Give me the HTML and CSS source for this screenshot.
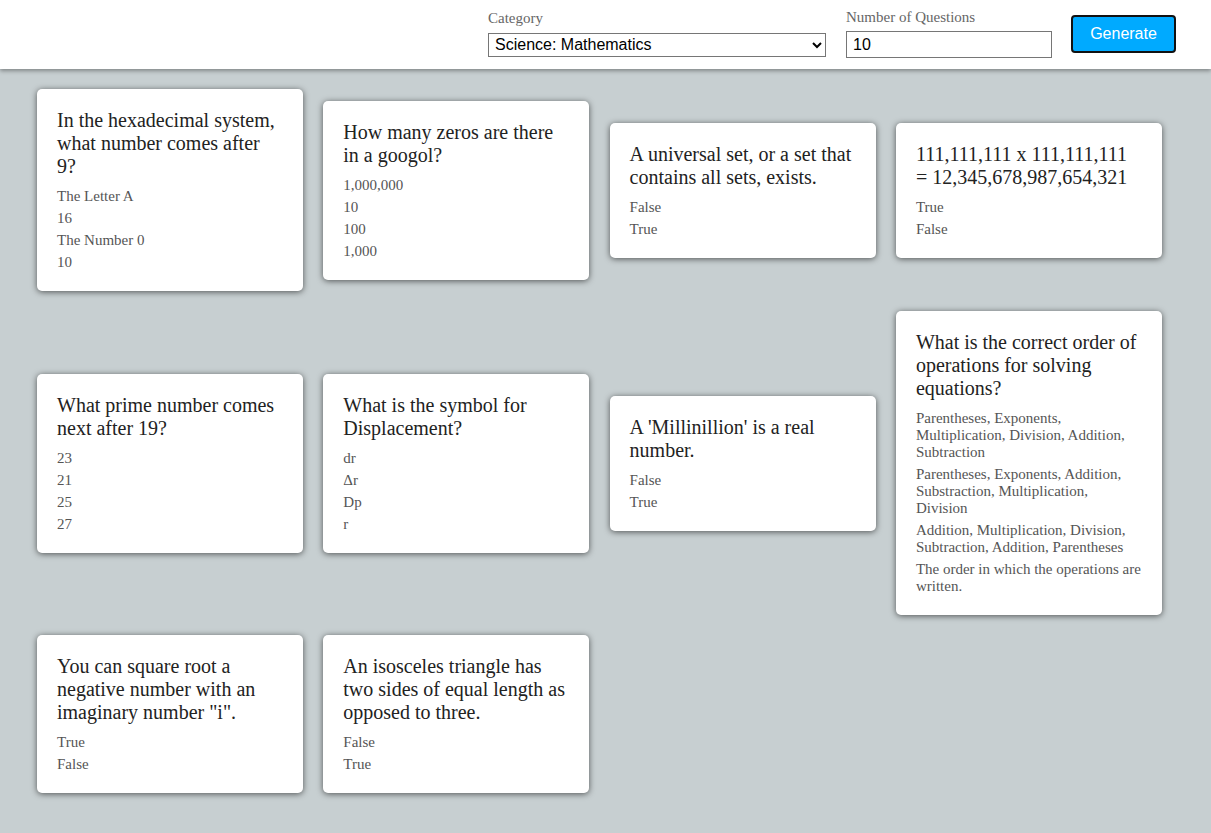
FILE: index.html
```html
<!DOCTYPE html>
<html>
<head>
<meta charset="utf-8">
<link rel="stylesheet" href="styles.css">
</head>
<body>
<header class="topbar">
  <div class="field">
    <label class="field-label" for="cat">Category</label>
    <select id="cat" class="select">
      <option>Science: Mathematics</option>
    </select>
  </div>
  <div class="field field-last">
    <label class="field-label" for="num">Number of Questions</label>
    <input id="num" class="num-input" type="text" value="10">
  </div>
  <button class="generate">Generate</button>
</header>
<main class="cards">
  <div class="card">
    <div class="question">In the hexadecimal system, what number comes after 9?</div>
    <div class="answer">The Letter A</div>
    <div class="answer">16</div>
    <div class="answer">The Number 0</div>
    <div class="answer">10</div>
  </div>
  <div class="card">
    <div class="question">How many zeros are there in a googol?</div>
    <div class="answer">1,000,000</div>
    <div class="answer">10</div>
    <div class="answer">100</div>
    <div class="answer">1,000</div>
  </div>
  <div class="card">
    <div class="question">A universal set, or a set that contains all sets, exists.</div>
    <div class="answer">False</div>
    <div class="answer">True</div>
  </div>
  <div class="card">
    <div class="question">111,111,111 x 111,111,111 = 12,345,678,987,654,321</div>
    <div class="answer">True</div>
    <div class="answer">False</div>
  </div>
  <div class="card">
    <div class="question">What prime number comes next after 19?</div>
    <div class="answer">23</div>
    <div class="answer">21</div>
    <div class="answer">25</div>
    <div class="answer">27</div>
  </div>
  <div class="card">
    <div class="question">What is the symbol for Displacement?</div>
    <div class="answer">dr</div>
    <div class="answer">&Delta;r</div>
    <div class="answer">Dp</div>
    <div class="answer">r</div>
  </div>
  <div class="card">
    <div class="question">A 'Millinillion' is a real number.</div>
    <div class="answer">False</div>
    <div class="answer">True</div>
  </div>
  <div class="card">
    <div class="question">What is the correct order of operations for solving equations?</div>
    <div class="answer">Parentheses, Exponents, Multiplication, Division, Addition, Subtraction</div>
    <div class="answer">Parentheses, Exponents, Addition, Substraction, Multiplication, Division</div>
    <div class="answer">Addition, Multiplication, Division, Subtraction, Addition, Parentheses</div>
    <div class="answer">The order in which the operations are written.</div>
  </div>
  <div class="card">
    <div class="question">You can square root a negative number with an imaginary number &quot;i&quot;.</div>
    <div class="answer">True</div>
    <div class="answer">False</div>
  </div>
  <div class="card">
    <div class="question">An isosceles triangle has two sides of equal length as opposed to three.</div>
    <div class="answer">False</div>
    <div class="answer">True</div>
  </div>
</main>
</body>
</html>
```
FILE: styles.css
```css
html, body {
  margin: 0;
  padding: 0;
}
body {
  background: #c7cfd1;
  font-family: "Liberation Serif", "Times New Roman", serif;
  min-height: 833px;
}
.topbar {
  height: 69px;
  background: #ffffff;
  box-shadow: 0 2px 4px rgba(0, 0, 0, 0.35);
  display: flex;
  justify-content: flex-end;
  align-items: center;
  gap: 20px;
  padding-right: 35px;
  padding-bottom: 2px;
  box-sizing: border-box;
}
.field {
  display: flex;
  flex-direction: column;
}
.field-last {
  margin-right: -1px;
}
.field-label {
  font-size: 15px;
  color: #666666;
  margin-bottom: 5.5px;
}
.select {
  width: 338px;
  height: 24px;
  box-sizing: border-box;
  font-family: "Liberation Sans", Arial, sans-serif;
  font-size: 16px;
  color: #000;
  background: #fff;
  border: 1px solid #767676;
  border-radius: 0;
  padding: 0 2px;
}
.num-input {
  width: 206px;
  height: 27px;
  box-sizing: border-box;
  font-family: "Liberation Sans", Arial, sans-serif;
  font-size: 16px;
  color: #000;
  border: 1px solid #767676;
  padding: 1px 6px;
}
.generate {
  width: 105px;
  height: 38px;
  background: #00aaff;
  color: #ffffff;
  border: 2px solid #111111;
  border-radius: 4px;
  font-family: "Liberation Sans", Arial, sans-serif;
  font-size: 16px;
}
.cards {
  display: flex;
  flex-wrap: wrap;
  align-items: center;
  gap: 20px 20.3px;
  padding: 20px 37px;
}
.card {
  width: 266px;
  box-sizing: border-box;
  background: #ffffff;
  border-radius: 5px;
  box-shadow: 0 1px 6px rgba(0, 0, 0, 0.6);
  padding: 20px;
  display: flex;
  flex-direction: column;
  gap: 5px;
}
.question {
  font-size: 20px;
  color: #222222;
  margin-bottom: 5px;
}
.answer {
  font-size: 15px;
  color: #555555;
}
```
